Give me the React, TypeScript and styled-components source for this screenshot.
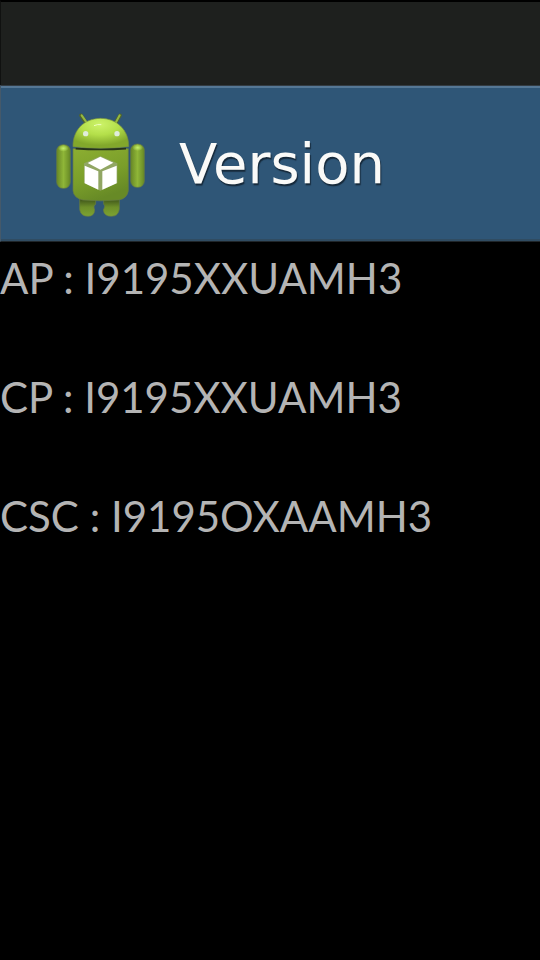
import React from "react";
import styled, { createGlobalStyle } from "styled-components";

const GlobalStyle = createGlobalStyle`
  html, body { margin: 0; background: #000; }
  * { box-sizing: border-box; }
`;

const Screen = styled.div`
  min-height: 100vh;
  display: flex;
  flex-direction: column;
  background: #000;
  color: #b4b4b4;
  font-family: Lato, "Open Sans", sans-serif;
`;

const StatusBar = styled.div`
  height: 85px;
  border-top: 2px solid #000;
  border-left: 1px solid #101110;
  background: #1e201e;
`;

const TitleBar = styled.header`
  height: 157px;
  display: flex;
  align-items: center;
  gap: 20px;
  padding-left: 38px;
  background: #2f5677;
  border-top: 1px solid #333b42;
  border-left: 1px solid #45596a;
  border-bottom: 1px solid #20262a;
  box-shadow: inset 0 2px #557795, inset 0 -2px #304c62;
`;

const Title = styled.h1`
  margin: 0;
  font-family: "DejaVu Sans", sans-serif;
  font-size: 56px;
  line-height: 64px;
  font-weight: 400;
  color: #fafaf8;
  text-shadow: 1px 2px 1px #16293a;
`;

const VersionList = styled.main`
  display: flex;
  flex-direction: column;
  gap: 59px;
  padding-top: 6px;
`;

const VersionRow = styled.p`
  margin: 0;
  font-size: 42px;
  line-height: 60px;
  white-space: nowrap;
`;

const RobotSvg = styled.svg`
  width: 120px;
  height: 125px;
  flex: none;
`;

const versions = [
  { part: "AP", build: "I9195XXUAMH3" },
  { part: "CP", build: "I9195XXUAMH3" },
  { part: "CSC", build: "I9195OXAAMH3" },
];

function Robot() {
  return (
    <RobotSvg viewBox="0 0 360 375" aria-hidden="true">
      <defs>
        <radialGradient id="head" cx="0.48" cy="0.2" r="0.7">
          <stop offset="0" stopColor="#cdf36a" />
          <stop offset="0.5" stopColor="#b4df4a" />
          <stop offset="1" stopColor="#82a82b" />
        </radialGradient>
        <linearGradient id="torso" x1="0" y1="0" x2="0.4" y2="1">
          <stop offset="0" stopColor="#8cae31" />
          <stop offset="0.6" stopColor="#7a9e2a" />
          <stop offset="1" stopColor="#678a26" />
        </linearGradient>
        <linearGradient id="arm" x1="0" y1="0" x2="1" y2="0">
          <stop offset="0" stopColor="#678725" />
          <stop offset="0.5" stopColor="#8fb638" />
          <stop offset="1" stopColor="#668825" />
        </linearGradient>
        <radialGradient id="cap">
          <stop offset="0" stopColor="#c4ef68" />
          <stop offset="1" stopColor="#c4ef68" stopOpacity="0" />
        </radialGradient>
        <linearGradient id="foot" x1="0" y1="0" x2="0" y2="1">
          <stop offset="0" stopColor="#384d18" />
          <stop offset="0.5" stopColor="#6d8f29" />
          <stop offset="1" stopColor="#7da332" />
        </linearGradient>
      </defs>
      <g stroke="#667b43" strokeWidth="2">
        <path d="M122 291H170V310Q162 314 167 327Q166 346 147 346Q126 346 122 326Z" fill="url(#foot)" />
        <path d="M194 291H241V325Q238 346 217 346Q195 346 193 327Q200 314 194 310Z" fill="url(#foot)" />
        <rect x="53" y="131" width="41" height="131" rx="19" fill="url(#arm)" />
        <rect x="275" y="129" width="41" height="130" rx="19" fill="url(#arm)" />
        <path d="M102 143H268V269Q265 292 239 297Q185 302 132 297Q104 291 102 269Z" fill="url(#torso)" />
      </g>
      <ellipse cx="73" cy="142" rx="16" ry="10" fill="url(#cap)" />
      <ellipse cx="296" cy="140" rx="16" ry="10" fill="url(#cap)" />
      <path d="M126 43L142 66M243 43L229 66" stroke="#526527" strokeWidth="11" strokeLinecap="round" />
      <path d="M128 43L143 65M242 43L230 65" stroke="#94b943" strokeWidth="6" strokeLinecap="round" />
      <path d="M102 137C101 87 135 53 184 52C233 52 270 87 269 137Q184 147 102 137Z" fill="url(#head)" stroke="#748c40" strokeWidth="2" />
      <path d="M110 143Q185 148 261 143" fill="none" stroke="#26331a" strokeWidth="5" />
      <path d="M165 74Q176 69 187 71" fill="none" stroke="#edffbd" strokeWidth="3" />
      <g fill="#e0eddb">
        <circle cx="140" cy="98" r="8" />
        <circle cx="234" cy="98" r="8" />
      </g>
      <path d="M184 165L235 187V246L184 269L135 246V187Z" fill="#91a663" />
      <path d="M184 167L223 185L184 206L146 186Z" fill="#fff" />
      <path d="M137 194L178 211V266L137 247Z" fill="#fff" />
      <path d="M233 194L190 211V266L233 247Z" fill="#fff" />
    </RobotSvg>
  );
}

export default function App() {
  return (
    <Screen>
      <GlobalStyle />
      <StatusBar />
      <TitleBar>
        <Robot />
        <Title>Version</Title>
      </TitleBar>
      <VersionList>
        {versions.map(({ part, build }) => (
          <VersionRow key={part}>{part} : {build}</VersionRow>
        ))}
      </VersionList>
    </Screen>
  );
}
